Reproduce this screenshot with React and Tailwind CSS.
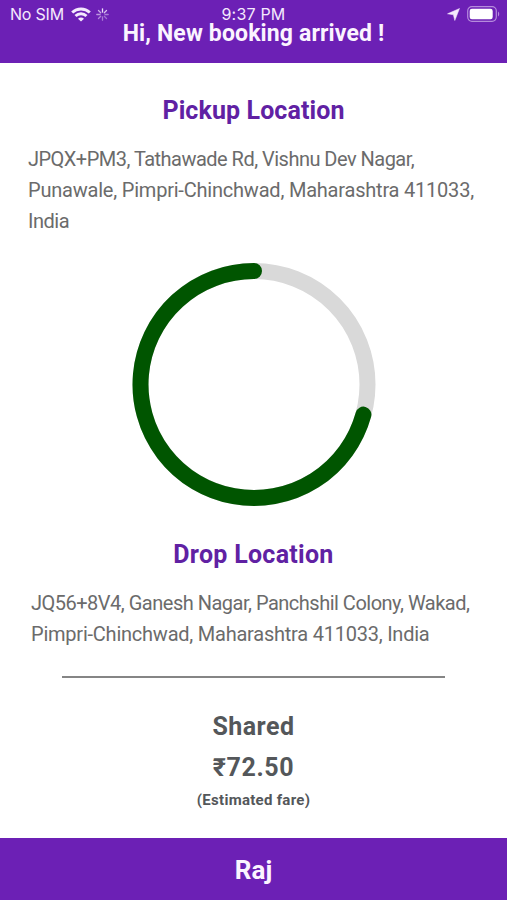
import React from 'react';

const booking = {
  pickup: [
    { text: 'JPQX+PM3, Tathawade Rd, Vishnu Dev Nagar,', tracking: 'tracking-[-0.52px]' },
    { text: 'Punawale, Pimpri-Chinchwad, Maharashtra 411033,', tracking: 'tracking-[-0.21px]' },
    { text: 'India', tracking: 'tracking-[-0.5px]' },
  ],
  drop: [
    { text: 'JQ56+8V4, Ganesh Nagar, Panchshil Colony, Wakad,', tracking: 'tracking-[-0.5px]' },
    { text: 'Pimpri-Chinchwad, Maharashtra 411033, India', tracking: 'tracking-[-0.23px]' },
  ],
  fare: '₹72.50',
  rider: 'Raj',
};

function WifiIcon() {
  return (
    <svg className="w-5 h-[15px]" viewBox="0 0 20 15" fill="none" stroke="currentColor" strokeWidth="2.9">
      <path d="M1.2 5.5C6.2 .8 13.8 .8 18.8 5.5" />
      <path d="M4.5 9C7.6 6 12.4 6 15.5 9" />
      <path d="M10 14.6 7 11.7c1.7-1.6 4.3-1.6 6 0z" fill="currentColor" stroke="none" />
    </svg>
  );
}

function SpinnerIcon() {
  const opacities = [0.95, 0.8, 0.45, 0.4, 0.45, 0.5, 0.6, 0.7];
  return (
    <svg className="w-[13px] h-[13px]" viewBox="0 0 13 13" stroke="currentColor" strokeWidth="1.3" strokeLinecap="round">
      {opacities.map((opacity, i) => (
        <path key={i} d="M6.5 .8v3.2" opacity={opacity} transform={`rotate(${i * 45} 6.5 6.5)`} />
      ))}
    </svg>
  );
}

function StatusBar() {
  return (
    <div className="absolute inset-x-0 top-0 h-[28px] grid grid-cols-3 items-center px-[7px] text-[#f4e9fd] font-['Inter',sans-serif] text-[16px]">
      <div className="flex items-center whitespace-nowrap pl-[3px]">
        <span className="w-[54px] tracking-[-0.2px]">No SIM</span>
        <span className="ml-[7px]"><WifiIcon /></span>
        <span className="ml-[5px]"><SpinnerIcon /></span>
      </div>
      <div className="text-center leading-4 whitespace-nowrap tracking-[0.2px]">9:37 PM</div>
      <div className="flex items-center justify-end">
        <svg className="w-[13px] h-[13px] mr-[7px]" viewBox="0 0 13 13" fill="currentColor">
          <path d="M12.5.5 7.8 12.5 6.4 6.8.5 5.8z" stroke="currentColor" strokeWidth=".5" strokeLinejoin="round" />
        </svg>
        <svg className="w-[33px] h-4" viewBox="0 0 33 16" fill="none">
          <rect x=".7" y=".7" width="28.6" height="14.6" rx="4.2" stroke="#b58bdc" strokeWidth="1.2" />
          <rect x="2.7" y="2.7" width="23" height="10.6" rx="2.2" fill="#fff" />
          <path d="M31 5.5c1.6.8 1.6 4.2 0 5z" fill="#b58bdc" />
        </svg>
      </div>
    </div>
  );
}

// Countdown ring, drawn clockwise from the elapsed angle back to the top
function CountdownRing({ elapsed }) {
  const r = 113.5;
  const a = (elapsed * Math.PI) / 180;
  const x = 122 + r * Math.sin(a);
  const y = 122 - r * Math.cos(a);
  return (
    <svg className="w-[244px] h-[244px] mx-auto" viewBox="0 0.5 244 244" fill="none" strokeWidth="16">
      <circle cx="122" cy="122" r={r} stroke="#d9d9d9" />
      <path d={`M${x} ${y}A${r} ${r} 0 1 1 122 ${122 - r}`} stroke="#005500" strokeLinecap="round" />
    </svg>
  );
}

function Address({ lines, className }) {
  return (
    <div className={`text-[20px] leading-[31px] text-[#6b6b6b] whitespace-nowrap ${className}`}>
      {lines.map((line) => (
        <div key={line.text}>
          <span className={line.tracking}>{line.text}</span>
        </div>
      ))}
    </div>
  );
}

export default function App() {
  return (
    <div className="w-[507px] h-[900px] overflow-hidden bg-white flex flex-col font-['Roboto','Noto_Sans',sans-serif]">
      <header className="relative h-[63px] shrink-0 bg-[#6c20b5]">
        <StatusBar />
        <h1 className="pt-[19px] text-center text-[23px] leading-[30px] font-bold text-[#fbf4ff] whitespace-nowrap">
          <span className="tracking-[0.14px]">Hi, New booking arrived !</span>
        </h1>
      </header>

      <main className="flex-1 flex flex-col">
        <h2 className="mt-[32px] text-center text-[25px] leading-[32px] font-bold text-[#6021a3]">
          <span className="tracking-[0.1px]">Pickup Location</span>
        </h2>
        <Address lines={booking.pickup} className="mt-[17px] pl-[28px]" />

        <div className="mt-[26px] pl-px">
          <CountdownRing elapsed={105.4} />
        </div>

        <h2 className="mt-[32px] text-center text-[25px] leading-[32px] font-bold text-[#6021a3]">
          <span className="tracking-[0.28px]">Drop Location</span>
        </h2>
        <Address lines={booking.drop} className="mt-[17px] pl-[31px]" />

        <hr className="mt-[26px] mx-[62px] border-t-2 border-[#858585]" />

        <div className="mt-[33px] text-center font-bold text-[#54575a]">
          <div className="text-[25px] leading-[32px] tracking-[0.45px]">Shared</div>
          <div className="mt-[9px] text-[25px] leading-[32px] tracking-[0.6px]">{booking.fare}</div>
          <div className="mt-[6px] text-[15px] leading-5 tracking-[0.28px]">(Estimated fare)</div>
        </div>
      </main>

      <footer className="h-[62px] shrink-0 bg-[#6c20b5] flex items-center justify-center pt-[2px] text-[26px] leading-8 font-bold text-[#fbf4ff]">
        {booking.rider}
      </footer>
    </div>
  );
}
